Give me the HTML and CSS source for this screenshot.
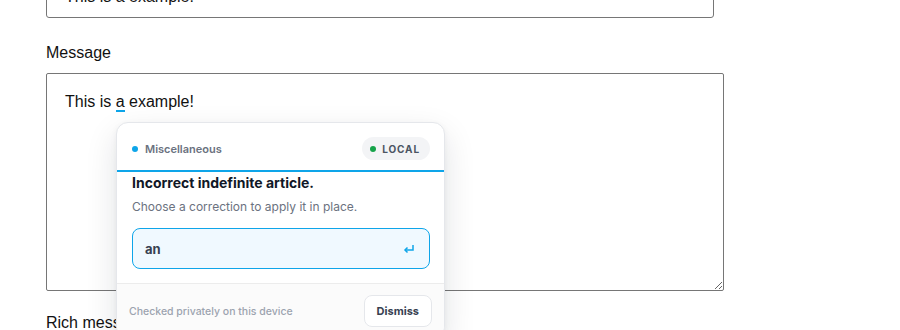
FILE: index.html
```html
<!DOCTYPE html>
<html lang="en">
<head>
    <meta charset="UTF-8">
    <meta name="viewport" content="width=device-width, initial-scale=1.0">
    <title>Grammar Check Demo</title>
    <link rel="stylesheet" href="styles.css">
</head>
<body>
    <div class="page">
        <input type="text" class="field-input" value="This is a example!">

        <label class="field-label">Message</label>
        <div class="field-textarea">This is <span class="issue">a</span> example!</div>

        <label class="field-label">Rich message</label>

        <div class="popover">
            <div class="popover-header">
                <div class="category"><span class="dot dot-blue"></span>Miscellaneous</div>
                <div class="badge"><span class="dot dot-green"></span>LOCAL</div>
            </div>
            <div class="popover-body">
                <div class="popover-title">Incorrect indefinite article.</div>
                <div class="popover-hint">Choose a correction to apply it in place.</div>
                <button class="suggestion">
                    <span>an</span>
                    <svg width="12" height="10" viewBox="0 0 12 10">
                        <polyline points="10,1 10,6 2,6" fill="none" stroke="#0ea5e9" stroke-width="1.5"/>
                        <polyline points="4.5,3.5 2,6 4.5,8.5" fill="none" stroke="#0ea5e9" stroke-width="1.5"/>
                    </svg>
                </button>
            </div>
            <div class="popover-footer">
                <span class="footer-note">Checked privately on this device</span>
                <button class="dismiss">Dismiss</button>
            </div>
        </div>
    </div>
</body>
</html>
```

FILE: styles.css
```css
body {
    margin: 0;
    font-family: "Liberation Sans", Arial, sans-serif;
    background: #fff;
    color: #111;
    overflow: hidden;
}
.page {
    position: relative;
    padding-left: 46px;
    margin-top: -24px;
}
.field-input {
    display: block;
    width: 668px;
    height: 42px;
    box-sizing: border-box;
    padding: 0 18px;
    border: 1px solid #767676;
    border-radius: 3px;
    font-family: inherit;
    font-size: 16px;
    color: #111;
}
.field-label {
    display: block;
    font-size: 16px;
    line-height: 20px;
    margin-top: 25px;
    margin-bottom: 10px;
}
.field-textarea {
    width: 678px;
    height: 218px;
    box-sizing: border-box;
    padding: 18px 18px;
    border: 1px solid #767676;
    border-radius: 2px;
    font-size: 16px;
    line-height: 20px;
    resize: both;
    overflow: auto;
}
.field-textarea + .field-label {
    margin-top: 22px;
}
.issue {
    border-bottom: 2px solid #0ea5e9;
}
.popover {
    position: absolute;
    left: 116px;
    top: 146px;
    width: 329px;
    box-sizing: border-box;
    background: #fff;
    border: 1px solid #e5e7eb;
    border-radius: 12px;
    box-shadow: 0 12px 32px rgba(15, 23, 42, 0.12), 0 2px 6px rgba(15, 23, 42, 0.05);
    font-family: Inter, "Liberation Sans", sans-serif;
    overflow: hidden;
}
.popover-header {
    display: flex;
    justify-content: space-between;
    align-items: center;
    padding: 14px 14px 10px 15px;
    border-bottom: 2px solid #0ea5e9;
}
.category {
    display: flex;
    align-items: center;
    gap: 7px;
    font-size: 11px;
    font-weight: 600;
    color: #6b7280;
}
.dot {
    display: inline-block;
    width: 6px;
    height: 6px;
    border-radius: 50%;
}
.dot-blue {
    background: #0ea5e9;
}
.dot-green {
    background: #16a34a;
}
.badge {
    display: flex;
    align-items: center;
    gap: 6px;
    height: 23px;
    padding: 0 10px 0 8px;
    background: #f3f4f6;
    border-radius: 12px;
    font-size: 10px;
    font-weight: 700;
    letter-spacing: 0.9px;
    color: #4b5563;
}
.popover-body {
    padding: 1px 14px 14px 15px;
    border-bottom: 1px solid #ececec;
}
.popover-title {
    font-size: 14px;
    font-weight: 700;
    line-height: 20px;
    color: #111827;
}
.popover-hint {
    font-size: 12px;
    line-height: 16px;
    margin-top: 6px;
    color: #6b7280;
}
.suggestion {
    display: flex;
    justify-content: space-between;
    align-items: center;
    width: 100%;
    height: 41px;
    margin-top: 13px;
    padding: 0 14px 0 12px;
    background: #f0f9ff;
    border: 1px solid #0ea5e9;
    border-radius: 8px;
    font-family: inherit;
    font-size: 13px;
    font-weight: 700;
    color: #374151;
    cursor: pointer;
}
.popover-footer {
    display: flex;
    justify-content: space-between;
    align-items: center;
    padding: 11px 12px 10px 12px;
    background: #fbfbfb;
}
.footer-note {
    font-size: 10.5px;
    font-weight: 500;
    color: #9ca3af;
}
.dismiss {
    height: 32px;
    padding: 0 12px;
    background: #fff;
    border: 1px solid #e5e7eb;
    border-radius: 8px;
    font-family: inherit;
    font-size: 11px;
    font-weight: 700;
    color: #374151;
    cursor: pointer;
}
```
